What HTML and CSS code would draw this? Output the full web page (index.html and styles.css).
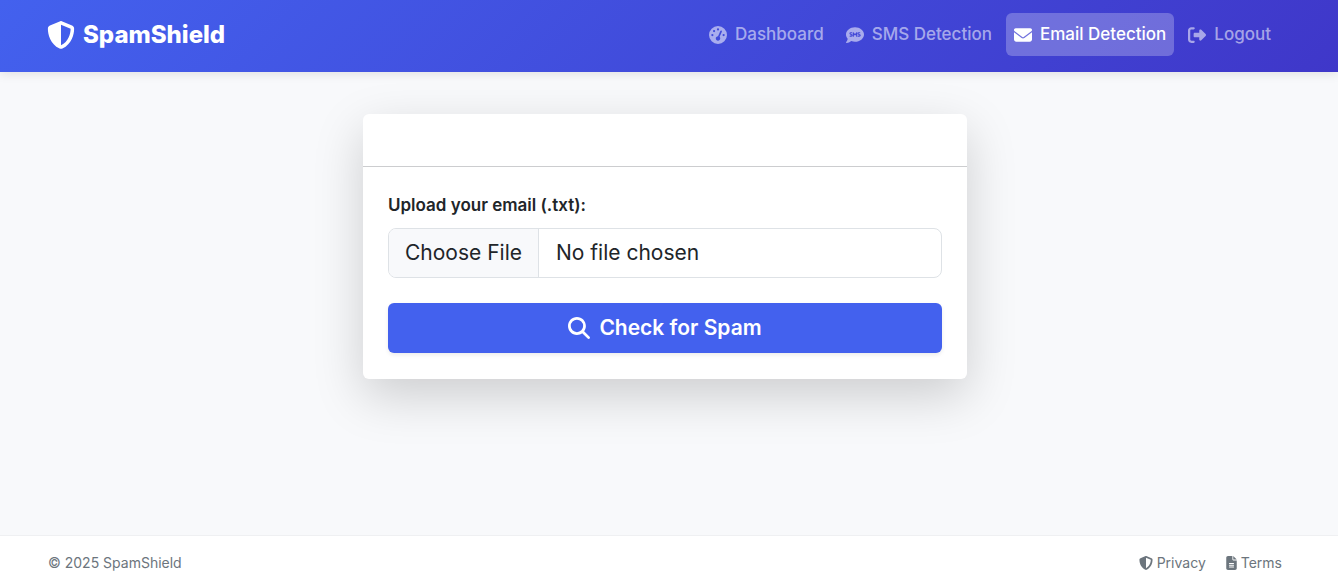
FILE: index.html
```
<!DOCTYPE html>
<html lang="en">
<head>
<meta charset="utf-8">
<meta name="viewport" content="width=device-width, initial-scale=1">
<title>SpamShield - Email Detection</title>
<link rel="stylesheet" href="styles.css">
</head>
<body>
<header class="navbar">
  <a class="brand" href="#">
    <svg class="icon icon-brand" viewBox="0 0 512 512" aria-hidden="true"><path d="M256 0c4.600 0 9.200 1 13.400 2.900L457.700 82.800c22 9.300 38.400 31 38.300 57.200c-.5 99.200-41.300 280.700-213.600 363.200c-16.700 8-36.100 8-52.800 0C57.300 420.700 16.500 239.200 16 140c-.1-26.200 16.300-47.900 38.300-57.200L242.700 2.900C246.800 1 251.400 0 256 0zm0 66.800V444.800C394 378 431.100 230.100 432 141.400L256 66.800z"/></svg>
    <span>SpamShield</span>
  </a>
  <nav class="nav" aria-label="Main">
    <a class="nav-link" href="#">
      <svg class="icon" viewBox="0 0 512 512" aria-hidden="true"><path d="M0 256a256 256 0 1 1 512 0A256 256 0 1 1 0 256zM288 96a32 32 0 1 0 -64 0 32 32 0 1 0 64 0zM256 416c35.300 0 64-28.700 64-64c0-17.400-6.900-33.100-18.100-44.600L366 161.700c5.300-12.100-.2-26.300-12.300-31.600s-26.300 .2-31.600 12.300L257.900 288c-.6 0-1.300 0-1.900 0c-35.300 0-64 28.700-64 64s28.700 64 64 64zM176 144a32 32 0 1 0 -64 0 32 32 0 1 0 64 0zM96 288a32 32 0 1 0 0-64 32 32 0 1 0 0 64zm352-32a32 32 0 1 0 -64 0 32 32 0 1 0 64 0z"/></svg>
      <span>Dashboard</span>
    </a>
    <a class="nav-link" href="#">
      <svg class="icon" viewBox="0 0 512 512" aria-hidden="true">
        <mask id="bubble-marks">
          <rect width="512" height="512" fill="white"/>
          <g fill="none" stroke="black" stroke-width="32" stroke-linecap="round" stroke-linejoin="round">
            <path d="M165 192h-28c-16 0-25 9-25 22 0 34 66 17 66 52 0 14-11 22-26 22h-34"/>
            <path d="M208 288v-96l48 64 48-64v96"/>
            <path d="M391 192h-28c-16 0-25 9-25 22 0 34 66 17 66 52 0 14-11 22-26 22h-34"/>
          </g>
        </mask>
        <path mask="url(#bubble-marks)" d="M256 448c141.400 0 256-93.100 256-208S397.400 32 256 32S0 125.100 0 240c0 45.100 17.700 86.800 47.700 120.900c-1.900 24.500-11.400 46.300-21.400 62.900c-5.500 9.200-11.100 16.600-15.200 21.600c-2.100 2.500-3.700 4.400-4.900 5.700c-6 6.300-7.700 14.900-4.300 23.100C5.300 475 9.400 480 16 480c28.700 0 57.600-8.900 81.600-19.300c22.900-10 42.400-21.900 54.300-30.600c31.800 11.500 67 17.900 104.100 17.900z"/>
      </svg>
      <span>SMS Detection</span>
    </a>
    <a class="nav-link active" href="#" aria-current="page">
      <svg class="icon" viewBox="0 0 512 512" aria-hidden="true"><path d="M48 64C21.500 64 0 85.500 0 112c0 15.100 7.100 29.300 19.200 38.400L236.800 313.600c11.400 8.500 27 8.500 38.400 0L492.800 150.400c12.100-9.100 19.200-23.300 19.200-38.400c0-26.500-21.500-48-48-48H48zM0 176V384c0 35.300 28.700 64 64 64H448c35.300 0 64-28.700 64-64V176L294.400 339.200c-22.800 17.100-54 17.100-76.800 0L0 176z"/></svg>
      <span>Email Detection</span>
    </a>
    <a class="nav-link" href="#">
      <svg class="icon" viewBox="0 0 512 512" aria-hidden="true"><path d="M377.900 105.900L500.700 228.700c7.200 7.200 11.300 17.100 11.300 27.300s-4.100 20.100-11.300 27.300L377.900 406.100c-6.400 6.400-15 9.900-24 9.900c-18.700 0-33.900-15.200-33.900-33.900l0-62.100-128 0c-17.700 0-32-14.300-32-32l0-64c0-17.700 14.300-32 32-32l128 0 0-62.100c0-18.700 15.200-33.900 33.900-33.900c9 0 17.600 3.600 24 9.900zM160 96L96 96c-17.700 0-32 14.300-32 32l0 256c0 17.700 14.300 32 32 32l64 0c17.700 0 32 14.300 32 32s-14.300 32-32 32l-64 0c-53 0-96-43-96-96L0 128C0 75 43 32 96 32l64 0c17.700 0 32 14.300 32 32s-14.300 32-32 32z"/></svg>
      <span>Logout</span>
    </a>
  </nav>
</header>

<main class="main">
  <section class="card">
    <div class="card-header"></div>
    <form class="card-body">
      <label class="form-label" for="email-file">Upload your email (.txt):</label>
      <input class="file-input" type="file" id="email-file" accept=".txt">
      <button class="btn" type="submit">
        <svg class="icon icon-btn" viewBox="0 0 512 512" aria-hidden="true"><path d="M416 208c0 45.900-14.900 88.300-40 122.700L502.600 457.400c12.500 12.500 12.500 32.800 0 45.300s-32.800 12.500-45.300 0L330.700 376c-34.400 25.200-76.800 40-122.700 40C93.100 416 0 322.900 0 208S93.100 0 208 0S416 93.100 416 208zM208 352a144 144 0 1 0 0-288 144 144 0 1 0 0 288z"/></svg>
        <span>Check for Spam</span>
      </button>
    </form>
  </section>
</main>

<footer class="footer">
  <span>© 2025 SpamShield</span>
  <div class="footer-links">
    <a class="footer-link" href="#">
      <svg class="icon icon-small" viewBox="0 0 512 512" aria-hidden="true"><path d="M256 0c4.600 0 9.200 1 13.400 2.900L457.700 82.800c22 9.300 38.400 31 38.300 57.200c-.5 99.200-41.300 280.700-213.600 363.200c-16.700 8-36.100 8-52.800 0C57.300 420.700 16.500 239.200 16 140c-.1-26.200 16.300-47.900 38.300-57.200L242.700 2.900C246.800 1 251.400 0 256 0zm0 66.800V444.800C394 378 431.100 230.100 432 141.400L256 66.800z"/></svg>
      <span>Privacy</span>
    </a>
    <a class="footer-link" href="#">
      <svg class="icon icon-file" viewBox="0 0 384 512" aria-hidden="true"><path fill-rule="evenodd" d="M64 0C28.700 0 0 28.700 0 64V448c0 35.300 28.700 64 64 64H320c35.300 0 64-28.700 64-64V160H256c-17.700 0-32-14.300-32-32V0H64zM256 0V128H384L256 0zM112 256H272a16 16 0 0 1 0 32H112a16 16 0 0 1 0-32zM112 320H272a16 16 0 0 1 0 32H112a16 16 0 0 1 0-32zM112 384H272a16 16 0 0 1 0 32H112a16 16 0 0 1 0-32z"/></svg>
      <span>Terms</span>
    </a>
  </div>
</footer>
</body>
</html>
```
FILE: styles.css
```
* {
  box-sizing: border-box;
}

body {
  display: flex;
  flex-direction: column;
  min-height: 100vh;
  margin: 0;
  background: #f8f9fb;
  color: #212529;
  font-family: Inter, "Liberation Sans", sans-serif;
  font-size: 17px;
  line-height: 26px;
}

a {
  color: inherit;
  text-decoration: none;
}

.icon {
  flex: none;
  width: 18px;
  height: 18px;
  fill: currentColor;
}

.navbar {
  display: flex;
  align-items: center;
  justify-content: space-between;
  padding: 13px 59px 16px 47px;
  background: linear-gradient(135deg, #4361ee, #3f37c9);
  box-shadow: 0 2px 10px rgba(0, 0, 0, 0.1);
  color: #fff;
}

.brand {
  display: flex;
  align-items: center;
  gap: 8px;
  font-size: 24px;
  font-weight: 800;
}

.icon-brand {
  width: 28px;
  height: 28px;
}

.nav {
  display: flex;
  gap: 6px;
}

.nav-link {
  display: flex;
  align-items: center;
  gap: 8px;
  padding: 8px;
  border-radius: 6px;
  color: rgba(255, 255, 255, 0.55);
  font-weight: 500;
  line-height: 27px;
}

.nav-link.active {
  background: rgba(255, 255, 255, 0.25);
  color: #fff;
}

.main {
  display: flex;
  flex: 1;
  align-items: flex-start;
  justify-content: center;
  padding: 42px 32px 42px 24px;
}

.card {
  width: 100%;
  max-width: 604px;
  border-radius: 6px;
  background: #fff;
  box-shadow: 0 17px 50px rgba(0, 0, 0, 0.175);
}

.card-header {
  height: 53px;
  border-bottom: 1px solid #cccdcf;
}

.card-body {
  display: flex;
  flex-direction: column;
  padding: 25px 25px 26px;
}

.form-label {
  margin-bottom: 10px;
  font-weight: 600;
}

.file-input {
  width: 100%;
  height: 50px;
  margin-bottom: 25px;
  padding: 8px 16px;
  overflow: hidden;
  border: 1px solid #dee2e6;
  border-radius: 8px;
  background: #fff;
  color: #212529;
  font: inherit;
  font-size: 21px;
  line-height: 32px;
}

.file-input::file-selector-button {
  margin: -8px 17px -8px -16px;
  padding: 8px 16px;
  border: 0 solid #dee2e6;
  border-right-width: 1px;
  border-radius: 0;
  background: #f8f9fb;
  color: #212529;
  font: inherit;
}

.btn {
  display: flex;
  align-items: center;
  justify-content: center;
  gap: 9px;
  padding: 9px 17px;
  border: 0;
  border-radius: 6px;
  background: #4361ee;
  box-shadow: 0 2px 4px rgba(0, 0, 0, 0.08);
  color: #fff;
  font: inherit;
  font-size: 21px;
  font-weight: 600;
  line-height: 32px;
}

.icon-btn {
  width: 22px;
  height: 22px;
}

.footer {
  display: flex;
  align-items: center;
  justify-content: space-between;
  padding: 15px 56px 11px 48px;
  border-top: 1px solid #eff0f2;
  background: #fff;
  color: #6c757d;
  font-size: 14px;
  line-height: 23px;
}

.footer-links {
  display: flex;
  gap: 20px;
}

.footer-link {
  display: flex;
  align-items: center;
  gap: 4px;
}

.icon-small {
  width: 14px;
  height: 14px;
}

.icon-file {
  width: 11px;
  height: 14px;
}
```
